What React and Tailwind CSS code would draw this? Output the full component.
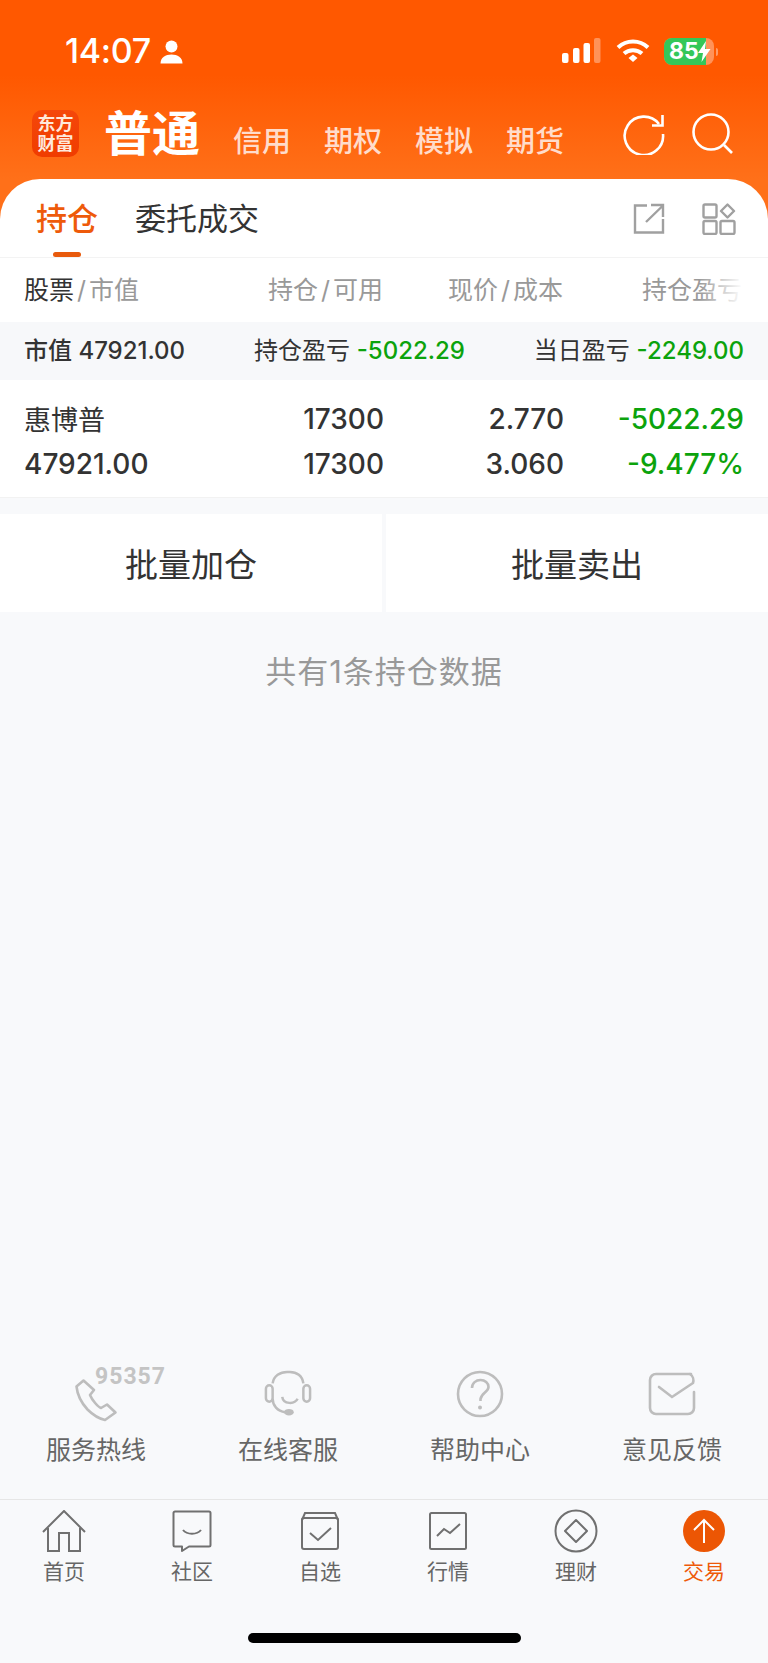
const cjk = "font-['Inter','Noto_Sans_CJK_SC',sans-serif]";

const Tab = ({ label, active, children }) => (
  <div className="flex flex-col items-center">
    <div className="h-[46px] flex items-center justify-center">{children}</div>
    <span className={`mt-[5px] text-[21px] leading-[26px] ${active ? "text-[#ee5a0a]" : "text-[#666]"}`}>{label}</span>
  </div>
);

const Service = ({ label, children }) => (
  <div className="flex flex-col items-center">
    <div className="relative h-[56px] w-[64px] flex items-center justify-center">{children}</div>
    <span className="mt-[11px] text-[25px] leading-[34px] text-[#666]">{label}</span>
  </div>
);

const Slash = () => <span className="mx-[3px] text-[#999]">/</span>;

export default function App() {
  return (
    <div className={`w-[768px] h-[1663px] flex flex-col bg-[#f8f9fb] overflow-hidden ${cjk}`}>
      <div className="bg-[linear-gradient(#ff5800_0,#ff5800_75px,#ff7019_179px)]">
        {/* status bar */}
        <div className="h-[101px] flex items-start pt-[33px] pl-[65px] pr-[50px] text-white">
          <span className="text-[34px] leading-[36px] font-medium tracking-[-0.3px]">14:07</span>
          <svg className="ml-[9px] mt-[7px]" width="23" height="24" viewBox="0 0 23 24" fill="#fff">
            <circle cx="11.5" cy="6.5" r="6" />
            <path d="M0.5 23.5c0-6 5-9 11-9s11 3 11 9z" />
          </svg>
          <svg className="ml-auto mt-[5px]" width="40" height="25" viewBox="0 0 40 25" fill="#fff">
            <rect x="0" y="15" width="6.5" height="10" rx="2" />
            <rect x="11" y="10" width="6.5" height="15" rx="2" />
            <rect x="21.5" y="5" width="6.5" height="20" rx="2" />
            <rect x="32" y="0" width="6.5" height="25" rx="2" opacity="0.35" />
          </svg>
          <svg className="ml-[14px] mt-[5px]" width="34" height="25" viewBox="0 0 34 25" fill="none" stroke="#fff" strokeWidth="4">
            <path d="M2 9.5c8.500-8 21.500-8 30 0" />
            <path d="M8 15.500c5-4.500 13-4.500 18 0" />
            <path d="M12.500 20l4.500-3.500 4.500 3.500-4.500 4z" fill="#fff" stroke="none" />
          </svg>
          <div className="ml-[14px] mt-[5px] flex items-center">
            <div className="w-[50px] h-[27px] rounded-[8px] overflow-hidden flex bg-[#ffffff59]">
              <div className="w-[42px] bg-[#34c759] flex items-center pl-[5px] text-[23px] leading-none font-bold text-white">85</div>
              <div className="relative w-[8px]">
                <svg className="absolute -left-[8px] top-[3px]" width="13" height="21" viewBox="0 0 13 21" fill="#fff">
                  <path d="M8 0L0 12h5l-1.500 9L12.500 8H7z" />
                </svg>
              </div>
            </div>
            <div className="ml-[2px] w-[2px] h-[8px] rounded-r bg-[#ffffff66]" />
          </div>
        </div>
        {/* account type nav */}
        <div className="h-[78px] flex items-start pl-[32px] pr-[34px]">
          <div className="mt-[9px] w-[47px] h-[47px] rounded-[10px] bg-[linear-gradient(#f5470a,#f03c00)] flex flex-col items-center justify-center text-[#ffe9dc] text-[18px] leading-[20px] font-bold">
            <div>东方</div>
            <div>财富</div>
          </div>
          <span className="ml-[25px] mt-[2px] text-[48px] leading-[62px] font-bold text-white">普通</span>
          <div className="ml-[33px] mt-[21px] flex gap-[33px] text-[29px] leading-[40px] font-medium text-[#ffdccb]">
            <span>信用</span>
            <span>期权</span>
            <span>模拟</span>
            <span>期货</span>
          </div>
          <svg className="ml-auto mt-[12px]" width="42" height="42" viewBox="0 0 42 42" fill="none" stroke="#fff" strokeWidth="2.6">
            <path d="M36 11A19.200 19.200 0 1 0 40 21" />
            <path d="M39.500 2v10.500H29" />
          </svg>
          <svg className="ml-[27px] mt-[12px]" width="42" height="42" viewBox="0 0 42 42" fill="none" stroke="#fff" strokeWidth="2.6">
            <circle cx="19" cy="19" r="17.500" />
            <path d="M32 32l8 8" />
          </svg>
        </div>
        {/* tabs card */}
        <div className="h-[79px] bg-white rounded-t-[40px] border-b border-[#f3f3f3] flex items-start pl-[36px] pr-[32px]">
          <div className="relative h-[78px]">
            <span className="block mt-[20px] text-[31px] leading-[40px] font-medium text-[#ee5a0a]">持仓</span>
            <div className="absolute left-[17px] bottom-0 w-[28px] h-[5px] rounded-[3px] bg-[#e85a0c]" />
          </div>
          <span className="ml-[37px] mt-[20px] text-[31px] leading-[40px] text-[#333]">委托成交</span>
          <svg className="ml-auto mt-[24px]" width="32" height="32" viewBox="0 0 32 32" fill="none" stroke="#a0a0a0" strokeWidth="2.4">
            <path d="M14 2.500H2v27h28V16" />
            <path d="M13 19L29.500 3M18 2h12v12" />
          </svg>
          <svg className="ml-[37px] mt-[24px]" width="34" height="32" viewBox="0 0 34 32" fill="none" stroke="#a0a0a0" strokeWidth="2.4">
            <rect x="1.500" y="1.500" width="13" height="13" rx="1.500" />
            <rect x="1.500" y="18" width="13" height="13" rx="1.500" />
            <rect x="18.500" y="18" width="14" height="13" rx="1.500" />
            <path d="M25.500 1.500l6.500 6.500-6.500 6.500-6.500-6.500z" strokeLinejoin="round" />
          </svg>
        </div>
      </div>

      {/* column header */}
      <div className="h-[64px] bg-white grid grid-cols-[179px_180px_180px_180px] pl-[24px] items-center text-[25px] leading-[32px] text-[#999]">
        <div className="whitespace-nowrap"><span className="text-[#333]">股票</span><Slash />市值</div>
        <div className="text-right whitespace-nowrap">持仓<Slash />可用</div>
        <div className="text-right whitespace-nowrap">现价<Slash />成本</div>
        <div className="relative text-right whitespace-nowrap overflow-hidden pr-[1px]">
          持仓盈亏
          <div className="absolute right-0 top-0 bottom-0 w-[44px] bg-[linear-gradient(to_right,#ffffff00,#fff)]" />
        </div>
      </div>

      {/* summary */}
      <div className="h-[58px] bg-[#f7f8fa] flex items-center justify-between pl-[24px] pr-[24px] text-[24px] leading-[30px] text-[#333] font-medium whitespace-nowrap">
        <span>市值 47921.00</span>
        <span className="font-normal">持仓盈亏 <span className="font-medium text-[#0ca30c]">-5022.29</span></span>
        <span className="font-normal">当日盈亏 <span className="font-medium text-[#0ca30c]">-2249.00</span></span>
      </div>

      {/* position row */}
      <div className="h-[118px] bg-white border-b border-[#f2f2f2] grid grid-cols-[180px_180px_180px_180px] pl-[24px] pt-[16px] auto-rows-[45px] items-center text-[28px] leading-[38px] font-medium text-[#333]">
        <div className="text-[27px] font-normal pt-[4px]">惠博普</div>
        <div className="text-right">17300</div>
        <div className="text-right">2.770</div>
        <div className="text-right text-[#0ca30c]">-5022.29</div>
        <div>47921.00</div>
        <div className="text-right">17300</div>
        <div className="text-right">3.060</div>
        <div className="text-right text-[#0ca30c]">-9.477%</div>
      </div>

      {/* batch actions */}
      <div className="mt-[16px] h-[98px] flex gap-[4px] text-[33px] leading-[44px] text-[#333]">
        <div className="w-[382px] bg-white flex items-center justify-center pt-[3px]">批量加仓</div>
        <div className="flex-1 bg-white flex items-center justify-center pt-[3px]">批量卖出</div>
      </div>

      <div className="mt-[39px] text-center text-[31px] leading-[42px] tracking-[1px] text-[#999]">共有1条持仓数据</div>

      {/* services */}
      <div className="mt-auto grid grid-cols-4 pb-[32px]">
        <Service label="服务热线">
          <span className="absolute left-[31px] -top-[1px] text-[23px] leading-[24px] font-bold text-[#c4c4c4] tracking-[1px] font-['Roboto',sans-serif]">95357</span>
          <svg className="mt-[12px]" width="44" height="44" viewBox="0 0 44 44" fill="none" stroke="#bdbdbd" strokeWidth="2.600" strokeLinejoin="round">
            <path d="M9.500 2.500l-7 6c1 10 5.500 17 11 23 5 5 11 9 17.500 10.500l10.500-7.500-8.500-8-6 3.500c-3-1-9-8-11-13l4-5z" />
          </svg>
        </Service>
        <Service label="在线客服">
          <svg width="48" height="50" viewBox="0 0 50 50" fill="none" stroke="#bdbdbd" strokeWidth="2.600">
            <path d="M9 14C10 6 17 2 24 2h3c7 0 13 4 14 12" />
            <rect x="2" y="16" width="7" height="17" rx="3.500" />
            <rect x="41" y="16" width="7" height="17" rx="3.500" />
            <path d="M9 30c0 7 5 13 13 14" />
            <path d="M19 28c1 8 13 8 16 2" />
            <ellipse cx="26" cy="44" rx="5" ry="3.500" fill="#bdbdbd" stroke="none" />
          </svg>
        </Service>
        <Service label="帮助中心">
          <svg width="48" height="48" viewBox="0 0 48 48" fill="none" stroke="#bdbdbd" strokeWidth="2.600">
            <circle cx="24" cy="24" r="22" />
            <path d="M16 18c0-5 4-8 8.500-8 4.500 0 8 3 8 7 0 5-7 6-8 12v2" />
            <circle cx="24" cy="37.500" r="2" fill="#bdbdbd" stroke="none" />
          </svg>
        </Service>
        <Service label="意见反馈">
          <svg width="48" height="44" viewBox="0 0 48 44" fill="none" stroke="#bdbdbd" strokeWidth="2.600" strokeLinecap="round">
            <path d="M43 2H8a6 6 0 0 0-6 6v28a6 6 0 0 0 6 6h32a6 6 0 0 0 6-6V20" />
            <path d="M11 15l13 10 21-14c1-3 0-7-3-9" />
          </svg>
        </Service>
      </div>

      {/* bottom tabs */}
      <div className="h-[164px] border-t border-[#e6e6e6] pt-[8px]">
        <div className="grid grid-cols-6">
          <Tab label="首页">
            <svg width="44" height="42" viewBox="0 0 44 42" fill="none" stroke="#707070" strokeWidth="2">
              <path d="M1 22L22 1l21 21" />
              <path d="M6 18v23h11V23h10v18h11V18" />
            </svg>
          </Tab>
          <Tab label="社区">
            <svg width="40" height="42" viewBox="0 0 40 42" fill="none" stroke="#707070" strokeWidth="2">
              <path d="M3 1.500h34a1.500 1.500 0 0 1 1.500 1.500v32a1.500 1.500 0 0 1-1.500 1.500H17L10 41v-4.500H3A1.500 1.500 0 0 1 1.500 35V3A1.500 1.500 0 0 1 3 1.500z" strokeLinejoin="round" />
              <path d="M11 20c4 5 14 5 18 0" />
            </svg>
          </Tab>
          <Tab label="自选">
            <svg width="38" height="38" viewBox="0 0 38 38" fill="none" stroke="#707070" strokeWidth="2">
              <rect x="1" y="6" width="36" height="31" rx="2" />
              <path d="M1 8l3-7h30l3 7" />
              <path d="M9 21l8 7 13-12" />
            </svg>
          </Tab>
          <Tab label="行情">
            <svg width="38" height="38" viewBox="0 0 38 38" fill="none" stroke="#707070" strokeWidth="2">
              <rect x="1" y="1" width="36" height="36" rx="1.500" />
              <path d="M8 24l7-7 6 4 10-9" />
            </svg>
          </Tab>
          <Tab label="理财">
            <svg width="44" height="44" viewBox="0 0 44 44" fill="none" stroke="#707070" strokeWidth="2">
              <circle cx="22" cy="22" r="20.500" />
              <path d="M22 11l11 11-11 11-11-11z" strokeLinejoin="round" />
            </svg>
          </Tab>
          <Tab label="交易" active>
            <svg width="42" height="42" viewBox="0 0 42 42" fill="none" stroke="#fff" strokeWidth="2">
              <circle cx="21" cy="21" r="21" fill="#ec5604" stroke="none" />
              <path d="M21 33V10M11 20l10-10 10 10" />
            </svg>
          </Tab>
        </div>
        <div className="mt-[48px] mx-auto w-[273px] h-[10px] rounded-full bg-black" />
      </div>
    </div>
  );
}
